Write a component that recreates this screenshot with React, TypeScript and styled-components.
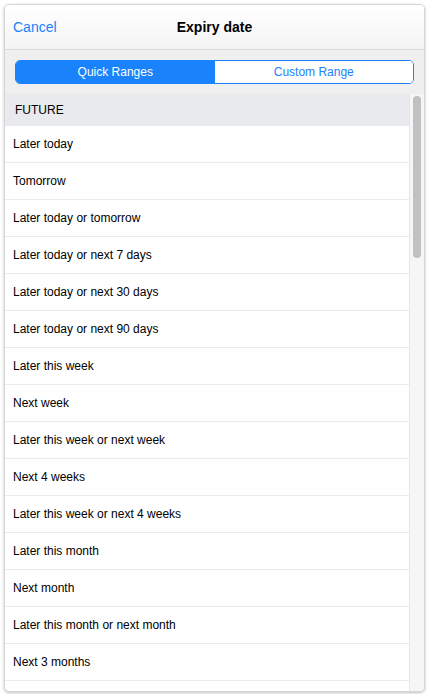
import React from 'react'
import styled, { createGlobalStyle } from 'styled-components'

const ranges = [
  'Later today',
  'Tomorrow',
  'Later today or tomorrow',
  'Later today or next 7 days',
  'Later today or next 30 days',
  'Later today or next 90 days',
  'Later this week',
  'Next week',
  'Later this week or next week',
  'Next 4 weeks',
  'Later this week or next 4 weeks',
  'Later this month',
  'Next month',
  'Later this month or next month',
  'Next 3 months',
]

export default function App(): React.ReactElement {
  return (
    <>
      <GlobalStyle />
      <Page>
        <Panel>
          <Header>
            <HeaderButton>Cancel</HeaderButton>
            <Title>Expiry date</Title>
            <HeaderSpacer />
          </Header>
          <Toolbar>
            <Segmented>
              <Segment active>Quick Ranges</Segment>
              <Segment>Custom Range</Segment>
            </Segmented>
          </Toolbar>
          <Body>
            <List>
              <SectionHeader>FUTURE</SectionHeader>
              {ranges.map((r) => (
                <Row key={r}>{r}</Row>
              ))}
            </List>
            <ScrollTrack>
              <ScrollThumb />
            </ScrollTrack>
          </Body>
        </Panel>
      </Page>
    </>
  )
}

const GlobalStyle = createGlobalStyle`
  html, body {
    margin: 0;
    padding: 0;
    background: #ffffff;
    font-family: 'Liberation Sans', Arial, sans-serif;
  }
`

const Page = styled.div`
  width: 430px;
  height: 694px;
  padding: 4px 5px 4px 4px;
  box-sizing: border-box;
`

const Panel = styled.div`
  display: flex;
  flex-direction: column;
  height: 686px;
  border: 1px solid #d6d6d6;
  border-radius: 5px;
  box-shadow: 0 1px 3px rgba(0, 0, 0, 0.25);
  overflow: hidden;
  background: #ffffff;
`

const Header = styled.div`
  display: flex;
  align-items: center;
  justify-content: space-between;
  height: 44px;
  padding: 0 8px;
  background: linear-gradient(#ffffff, #f4f4f4);
  border-bottom: 1px solid #d9d9d9;
  flex-shrink: 0;
`

const HeaderButton = styled.div`
  width: 80px;
  font-size: 14px;
  color: #1a82fb;
`

const HeaderSpacer = styled.div`
  width: 80px;
`

const Title = styled.div`
  font-size: 14px;
  font-weight: bold;
  color: #000000;
`

const Toolbar = styled.div`
  display: flex;
  align-items: center;
  height: 44px;
  padding: 0 10px;
  background: #efefef;
  flex-shrink: 0;
`

const Segmented = styled.div`
  display: flex;
  flex: 1;
  height: 24px;
  border: 1px solid #1a82fb;
  border-radius: 5px;
  overflow: hidden;
  box-sizing: border-box;
`

const Segment = styled.div<{ active?: boolean }>`
  flex: 1;
  display: flex;
  align-items: center;
  justify-content: center;
  font-size: 12px;
  background: ${(p) => (p.active ? '#1a82fb' : '#ffffff')};
  color: ${(p) => (p.active ? '#ffffff' : '#1a82fb')};
`

const Body = styled.div`
  display: flex;
  flex: 1;
  min-height: 0;
  overflow: hidden;
`

const List = styled.div`
  flex: 1;
  display: flex;
  flex-direction: column;
`

const SectionHeader = styled.div`
  display: flex;
  align-items: center;
  height: 32px;
  padding: 0 10px;
  background: #e8eaed;
  font-size: 12px;
  color: #000000;
  flex-shrink: 0;
`

const Row = styled.div`
  display: flex;
  align-items: center;
  height: 36px;
  padding: 0 8px;
  border-bottom: 1px solid #ebebeb;
  font-size: 12px;
  color: #000000;
  flex-shrink: 0;
`

const ScrollTrack = styled.div`
  width: 15px;
  flex-shrink: 0;
  background: #f6f6f6;
  border-left: 1px solid #e6e6e6;
  padding: 2px 3px 0 3px;
  box-sizing: border-box;
`

const ScrollThumb = styled.div`
  width: 8px;
  height: 162px;
  border-radius: 4px;
  background: #c1c1c1;
`
